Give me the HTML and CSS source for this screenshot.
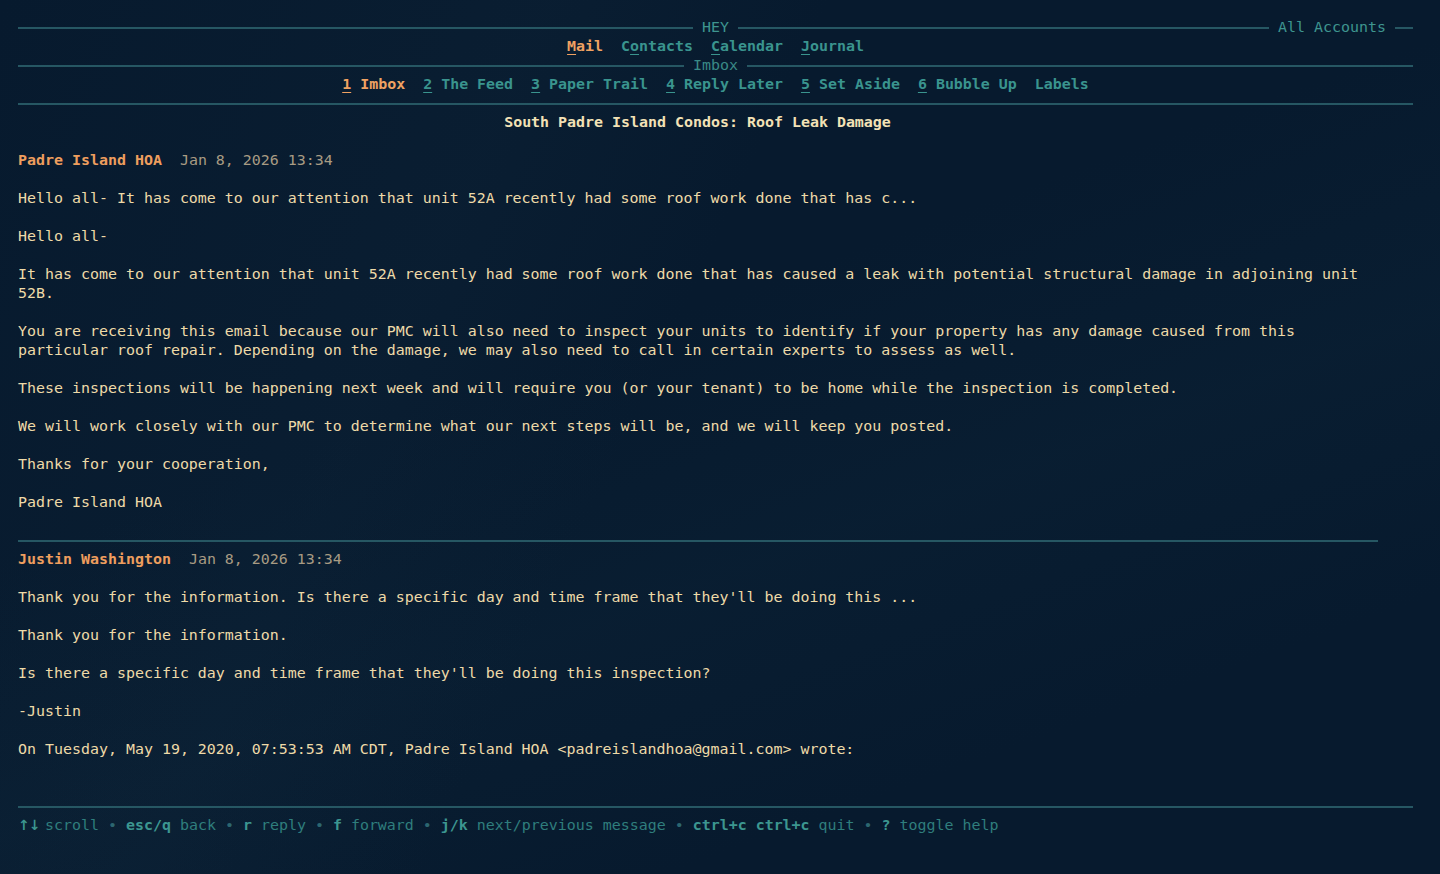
FILE: index.html
```html
<!DOCTYPE html>
<html lang="en">
<head>
<meta charset="utf-8">
<title>HEY — South Padre Island Condos: Roof Leak Damage</title>
<link rel="stylesheet" href="styles.css">
</head>
<body>
<div class="app">
  <header class="top">
    <div class="titlebar row">
      <div class="side"><span class="rule"></span></div>
      <span class="title">HEY</span>
      <div class="side"><span class="rule"></span><span class="title">All Accounts</span><span class="rule stub"></span></div>
    </div>
    <nav class="apps row">
      <span class="item active"><u>M</u>ail</span>
      <span class="item">C<u>o</u>ntacts</span>
      <span class="item"><u>C</u>alendar</span>
      <span class="item"><u>J</u>ournal</span>
    </nav>
    <div class="sectionbar row">
      <span class="rule"></span><span class="title light">Imbox</span><span class="rule"></span>
    </div>
    <nav class="tabs row">
      <span class="item active"><u>1</u> Imbox</span>
      <span class="item"><u>2</u> The Feed</span>
      <span class="item"><u>3</u> Paper Trail</span>
      <span class="item"><u>4</u> Reply Later</span>
      <span class="item"><u>5</u> Set Aside</span>
      <span class="item"><u>6</u> Bubble Up</span>
      <span class="item">Labels</span>
    </nav>
    <div class="row fullrule"><span class="rule"></span></div>
  </header>

  <main class="pane">
    <h1 class="subject">South Padre Island Condos: Roof Leak Damage</h1>

    <article class="message">
      <div class="msg-head"><span class="sender">Padre Island HOA</span><span class="date">Jan 8, 2026 13:34</span></div>
      <p class="preview">Hello all- It has come to our attention that unit 52A recently had some roof work done that has c...</p>
      <p>Hello all-</p>
      <p>It has come to our attention that unit 52A recently had some roof work done that has caused a leak with potential structural damage in adjoining unit<br>52B.</p>
      <p>You are receiving this email because our PMC will also need to inspect your units to identify if your property has any damage caused from this<br>particular roof repair. Depending on the damage, we may also need to call in certain experts to assess as well.</p>
      <p>These inspections will be happening next week and will require you (or your tenant) to be home while the inspection is completed.</p>
      <p>We will work closely with our PMC to determine what our next steps will be, and we will keep you posted.</p>
      <p>Thanks for your cooperation,</p>
      <p>Padre Island HOA</p>
    </article>

    <div class="divider row"><span class="rule"></span></div>

    <article class="message">
      <div class="msg-head"><span class="sender">Justin Washington</span><span class="date">Jan 8, 2026 13:34</span></div>
      <p class="preview">Thank you for the information. Is there a specific day and time frame that they'll be doing this ...</p>
      <p>Thank you for the information.</p>
      <p>Is there a specific day and time frame that they'll be doing this inspection?</p>
      <p>-Justin</p>
      <p>On Tuesday, May 19, 2020, 07:53:53 AM CDT, Padre Island HOA &lt;padreislandhoa@gmail.com&gt; wrote:</p>
    </article>
  </main>

  <footer class="foot">
    <div class="row fullrule"><span class="rule"></span></div>
    <div class="help"><span class="key arrows">↑↓</span> <span class="desc">scroll</span> <span class="sep">•</span> <span class="key">esc/q</span> <span class="desc">back</span> <span class="sep">•</span> <span class="key">r</span> <span class="desc">reply</span> <span class="sep">•</span> <span class="key">f</span> <span class="desc">forward</span> <span class="sep">•</span> <span class="key">j/k</span> <span class="desc">next/previous message</span> <span class="sep">•</span> <span class="key">ctrl+c ctrl+c</span> <span class="desc">quit</span> <span class="sep">•</span> <span class="key">?</span> <span class="desc">toggle help</span></div>
  </footer>
</div>
</body>
</html>
```

FILE: styles.css
```css
* { box-sizing: border-box; }

html, body {
  margin: 0;
  padding: 0;
}

body {
  width: 1440px;
  height: 874px;
  overflow: hidden;
  background-color: #071a2e;
  background-image:
    linear-gradient(115deg, rgba(20, 40, 60, 0.0) 0%, rgba(20, 45, 65, 0.18) 30%, rgba(0, 0, 0, 0) 45%),
    linear-gradient(160deg, rgba(10, 28, 48, 0) 40%, rgba(12, 36, 56, 0.35) 60%, rgba(0, 0, 0, 0) 80%);
  font-family: "DejaVu Sans Mono", "Liberation Mono", monospace;
  font-size: 14.95px;
  line-height: 19px;
  color: #eedaa8;
}

.app {
  padding: 18px 27px 0 18px;
  display: flex;
  flex-direction: column;
}

.row {
  height: 19px;
  line-height: 19px;
  white-space: pre;
}

.rule {
  display: block;
  flex: 1 1 auto;
  height: 2px;
  background: #265763;
}

.title {
  padding: 0 9px;
  color: #3e958f;
}

.title.light {
  color: #3a8a86;
}

/* top bar */
.titlebar {
  display: grid;
  grid-template-columns: 1fr auto 1fr;
  align-items: center;
}

.titlebar .side {
  display: flex;
  align-items: center;
}

.titlebar .stub {
  flex: 0 0 18px;
}

.apps, .tabs {
  display: flex;
  justify-content: center;
  gap: 18px;
  font-weight: bold;
}

.item {
  color: #3a948e;
}

.item.active {
  color: #f0a262;
}

.item u {
  text-decoration: underline;
  text-underline-offset: 3px;
  text-decoration-thickness: 1px;
}

.sectionbar {
  display: flex;
  align-items: center;
}

.fullrule {
  display: flex;
  align-items: center;
}

/* message pane */
.pane {
  width: 1359px;
}

.subject {
  margin: 0 0 19px 0;
  font-size: inherit;
  line-height: 19px;
  font-weight: bold;
  text-align: center;
  color: #f3e2b6;
}

.message p {
  margin: 0 0 19px 0;
  white-space: pre;
}

.msg-head {
  height: 19px;
  margin-bottom: 19px;
  white-space: pre;
}

.sender {
  font-weight: bold;
  color: #ee9e5e;
  margin-right: 18px;
}

.date {
  color: #a89b83;
}

.divider {
  display: flex;
  align-items: center;
  width: 1360px;
}

/* footer */
.foot {
  margin-top: 19px;
}

.help {
  height: 19px;
  line-height: 19px;
  white-space: nowrap;
}

.help .key {
  font-weight: bold;
  color: #3c9690;
}

.help .arrows {
  display: inline-block;
  width: 18px;
  font-family: "DejaVu Sans", sans-serif;
  font-size: 14px;
  letter-spacing: -1px;
}

.help .desc {
  color: #2f7e7d;
}

.help .sep {
  color: #2c6670;
}
```
